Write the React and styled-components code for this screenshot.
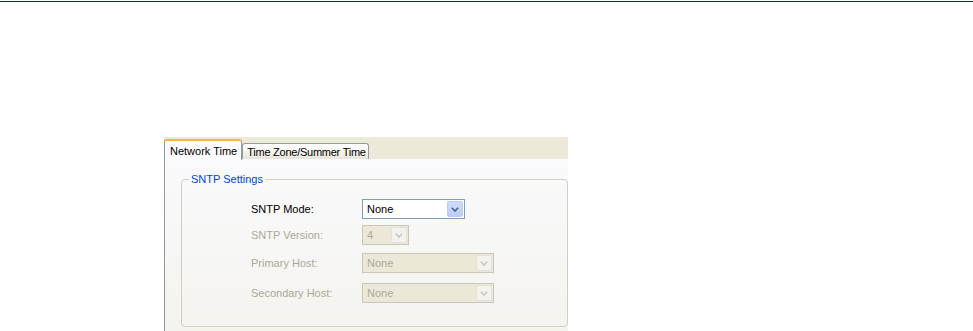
import React from "react";
import styled, { createGlobalStyle } from "styled-components";

const Global = createGlobalStyle`
  html, body { margin: 0; padding: 0; background: #ffffff; }
  body { font-family: "Liberation Sans", Arial, sans-serif; font-size: 11px; color: #000; }
`;

const TopRule = styled.div`
  height: 1px;
  margin-top: 1px;
  background: #0f2a5c;
`;

const Stage = styled.div`
  padding: 135px 0 0 164px;
`;

const Panel = styled.div`
  width: 404px;
  display: flex;
  flex-direction: column;
`;

const TabStrip = styled.div`
  height: 22px;
  background: #ece9d8;
  display: flex;
  align-items: flex-end;
  position: relative;
  z-index: 1;
`;

const Tab = styled.div`
  box-sizing: border-box;
  display: flex;
  align-items: center;
  white-space: nowrap;
  color: #000;
  border: 1px solid #919b9c;
  border-bottom: none;
  border-radius: 3px 3px 0 0;
  ${(p) =>
    p.$active
      ? `
    height: 21px;
    margin-bottom: -1px;
    padding: 1px 4px 0 5px;
    border-top: 2px solid #f9b43c;
    background: #fcfcfe;
  `
      : `
    height: 16px;
    margin-bottom: 0;
    padding: 0 2px 0 4px;
    letter-spacing: -0.25px;
    background: linear-gradient(#ffffff, #f0efe8 70%, #e6e4da);
  `}
`;

const Content = styled.div`
  height: 175px;
  box-sizing: border-box;
  border-left: 1px solid #919b9c;
  background: linear-gradient(#fafafc, #f4f3ee);
  padding: 14px 0 0 16px;
`;

const Group = styled.fieldset`
  box-sizing: border-box;
  width: 387px;
  margin: 0;
  padding: 0;
  border: 1px solid #d0d0bf;
  border-radius: 4px;
`;

const Legend = styled.legend`
  color: #0046d5;
  padding: 0 2px;
  margin-left: 7px;
  line-height: 13px;
`;

const GroupBody = styled.div`
  padding: 0 0 23px 69px;
`;

const Row = styled.div`
  display: grid;
  grid-template-columns: 111px auto;
  align-items: center;
  margin-top: ${(p) => p.$top}px;
`;

const Label = styled.span`
  color: ${(p) => (p.$disabled ? "#aca899" : "#000")};
  line-height: 13px;
`;

const Select = styled.div`
  box-sizing: border-box;
  width: ${(p) => p.$w}px;
  height: 20px;
  display: flex;
  align-items: stretch;
  border: 1px solid ${(p) => (p.$disabled ? "#c9c7ba" : "#7f9db9")};
  background: ${(p) => (p.$disabled ? "#ebe8d7" : "#ffffff")};
  padding: 1px;
`;

const Value = styled.span`
  flex: 1;
  display: flex;
  align-items: center;
  padding-left: 3px;
  color: ${(p) => (p.$disabled ? "#aca899" : "#000")};
`;

const DropButton = styled.span`
  box-sizing: border-box;
  width: 16px;
  display: flex;
  align-items: center;
  justify-content: center;
  border-radius: 2px;
  ${(p) =>
    p.$disabled
      ? `
    background: #f3f2ec;
    border: 1px solid #e4e2d8;
  `
      : `
    background: linear-gradient(#cfdcfd, #b9cdfa);
    border: 1px solid #bccbf0;
  `}
`;

const Chevron = ({ color }) => (
  <svg width="8" height="5" viewBox="0 0 8 5">
    <polyline points="0.8,0.8 4,4 7.2,0.8" fill="none" stroke={color} strokeWidth="1.6" />
  </svg>
);

const Combo = ({ value, width, disabled }) => (
  <Select $w={width} $disabled={disabled}>
    <Value $disabled={disabled}>{value}</Value>
    <DropButton $disabled={disabled}>
      <Chevron color={disabled ? "#c9c7ba" : "#4d6185"} />
    </DropButton>
  </Select>
);

const rows = [
  { label: "SNTP Mode:", value: "None", width: 103, top: 13, disabled: false },
  { label: "SNTP Version:", value: "4", width: 47, top: 6, disabled: true },
  { label: "Primary Host:", value: "None", width: 132, top: 8, disabled: true },
  { label: "Secondary Host:", value: "None", width: 132, top: 10, disabled: true },
];

export default function App() {
  return (
    <>
      <Global />
      <TopRule />
      <Stage>
        <Panel>
          <TabStrip>
            <Tab $active>Network Time</Tab>
            <Tab>Time Zone/Summer Time</Tab>
          </TabStrip>
          <Content>
            <Group>
              <Legend>SNTP Settings</Legend>
              <GroupBody>
                {rows.map((r) => (
                  <Row key={r.label} $top={r.top}>
                    <Label $disabled={r.disabled}>{r.label}</Label>
                    <Combo value={r.value} width={r.width} disabled={r.disabled} />
                  </Row>
                ))}
              </GroupBody>
            </Group>
          </Content>
        </Panel>
      </Stage>
    </>
  );
}
